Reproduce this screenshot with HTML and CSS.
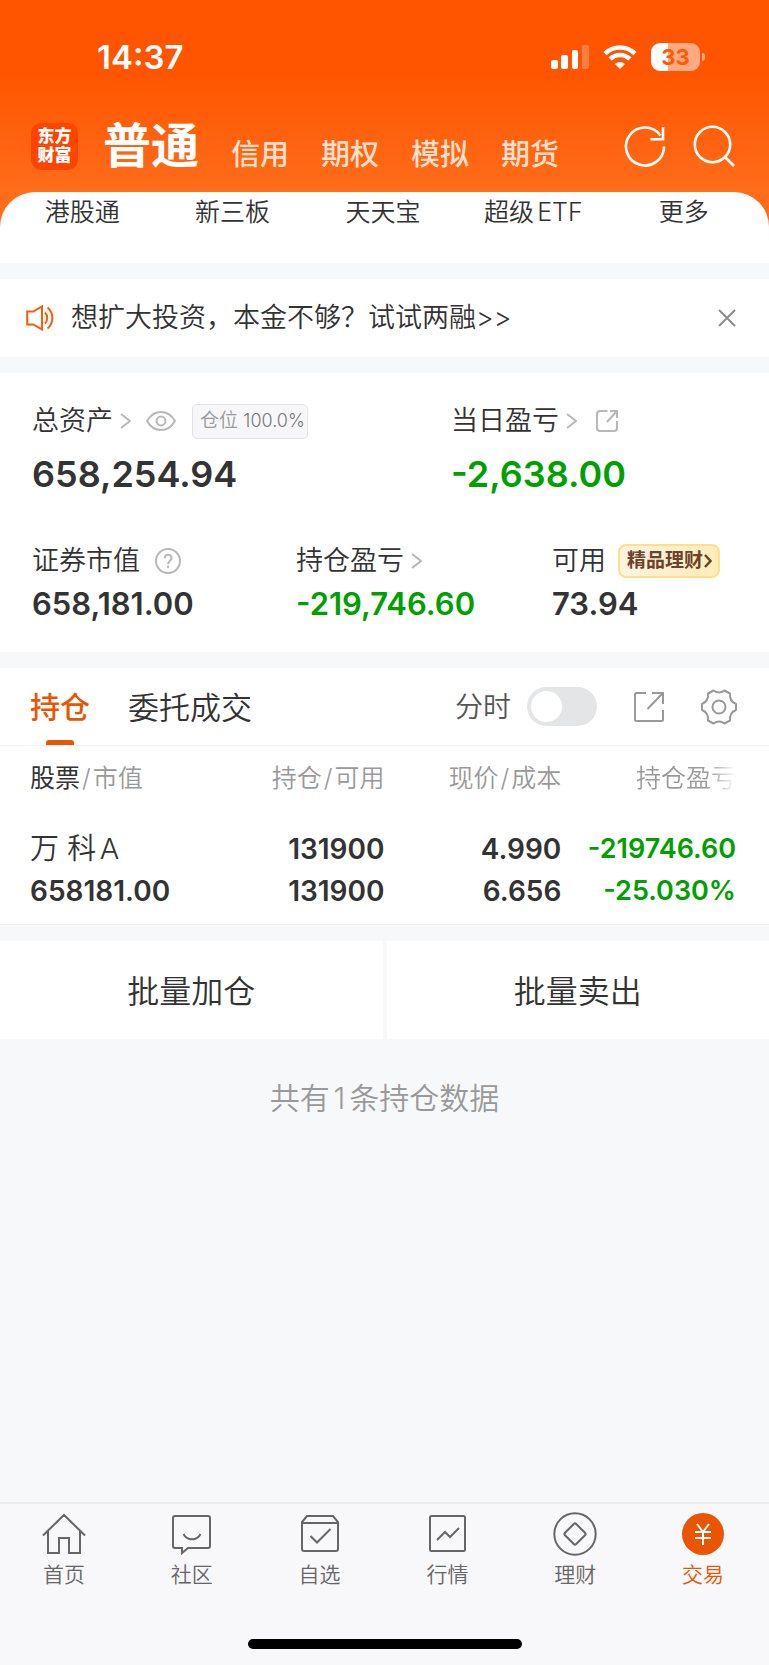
FILE: index.html
```html
<!DOCTYPE html>
<html lang="zh-CN">
<head>
  <meta charset="UTF-8" />
  <meta name="viewport" content="width=device-width, initial-scale=1" />
  <title>东方财富 - 交易</title>
  <link rel="stylesheet" href="styles.css">
</head>
<body>
  <header class="header">
    <div class="status-bar">
      <span class="time">14:37</span>
      <div class="status-icons">
        <svg width="38" height="24" viewBox="0 0 38 24" fill="#fff">
          <rect x="0" y="15" width="7" height="9" rx="2" />
          <rect x="10" y="10" width="7" height="14" rx="2" />
          <rect x="21" y="5" width="6" height="19" rx="2" />
          <rect x="31" y="0" width="7" height="24" rx="2" opacity=".25" />
        </svg>
        <svg width="34" height="24" viewBox="0 0 34 24" fill="none" stroke="#fff" stroke-width="4.6">
          <path d="M2 8.6a21.5 21.5 0 0 1 30 0" />
          <path d="M7.2 14a14 14 0 0 1 19.6 0" />
          <path d="M17 24l-5-4.9a7.2 7.2 0 0 1 10 0z" fill="#fff" stroke="none" />
        </svg>
        <span class="battery"><span class="battery-level">33</span></span>
      </div>
    </div>
    <nav class="top-nav">
      <a class="logo" href="#"><span>东方</span><span>财富</span></a>
      <a class="account active" href="#">普通</a>
      <a class="account" href="#">信用</a>
      <a class="account" href="#">期权</a>
      <a class="account" href="#">模拟</a>
      <a class="account" href="#">期货</a>
      <div class="top-actions">
        <button class="icon-btn" aria-label="刷新">
          <svg width="42" height="42" viewBox="0 0 42 42" fill="none" stroke="#fff" stroke-width="2.6">
            <path d="M40 21.5A19 19 0 1 1 36.5 10.5" />
            <path d="M39 2v12.3H26.5" />
          </svg>
        </button>
        <button class="icon-btn" aria-label="搜索">
          <svg width="42" height="42" viewBox="0 0 42 42" fill="none" stroke="#fff" stroke-width="2.6">
            <circle cx="19.5" cy="19.5" r="17.7" />
            <path d="M31.5 31.5l9.5 9.5" />
          </svg>
        </button>
      </div>
    </nav>
  </header>

  <main class="main">
    <nav class="shortcuts">
      <a href="#">港股通</a>
      <a href="#">新三板</a>
      <a href="#">天天宝</a>
      <a href="#">超级ETF</a>
      <a href="#">更多</a>
    </nav>

    <section class="notice">
      <svg width="28" height="26" viewBox="0 0 28 26" fill="none" stroke="#ff5a0a" stroke-width="2">
        <path d="M1.2 6.5h6L16 1.4v23L7.2 19.5h-6z" />
        <path d="M19 7.5c3 3 3 8 0 11" />
        <path d="M21.5 2.5c6.500 5.500 6.500 15.500 0 21" />
      </svg>
      <a class="notice-text" href="#">想扩大投资&#xFF0C;本金不够&#xFF1F;试试两融&gt;&gt;</a>
      <button class="icon-btn" aria-label="关闭">
        <svg width="18" height="18" viewBox="0 0 18 18" fill="none" stroke="#8c8c8c" stroke-width="2">
          <path d="M1 1l16 16M17 1L1 17" />
        </svg>
      </button>
    </section>

    <section class="assets">
      <div class="assets-row assets-total">
        <div class="asset">
          <div class="asset-label">
            总资产
            <svg class="chevron" width="11" height="16" viewBox="0 0 11 16"><path d="M1 1l9 7-9 7" /></svg>
            <svg class="eye" width="30" height="20" viewBox="0 0 30 20">
              <path d="M1 10C8-2 22-2 29 10 22 22 8 22 1 10z" />
              <circle cx="15" cy="10" r="4.4" />
            </svg>
            <span class="position-tag">仓位 <span>100.0%</span></span>
          </div>
          <div class="asset-value">658,254.94</div>
        </div>
        <div class="asset">
          <div class="asset-label">
            当日盈亏
            <svg class="chevron" width="11" height="16" viewBox="0 0 11 16"><path d="M1 1l9 7-9 7" /></svg>
            <svg class="share" width="22" height="22" viewBox="0 0 22 22">
              <path d="M11.5 1H4a3 3 0 0 0-3 3v14a3 3 0 0 0 3 3h14a3 3 0 0 0 3-3v-7" />
              <path d="M14 1h7v7M21 1L11 12" />
            </svg>
          </div>
          <div class="asset-value down">-2,638.00</div>
        </div>
      </div>
      <div class="assets-row assets-detail">
        <div class="asset">
          <div class="asset-label">
            证券市值
            <svg class="help" width="26" height="26" viewBox="0 0 26 26">
              <circle cx="13" cy="13" r="12" />
              <path d="M9.7 10.3c0-4.600 6.800-4.600 6.800-.3 0 3-3.400 3-3.400 6.200M13.100 17.800v2.200" />
            </svg>
          </div>
          <div class="asset-value">658,181.00</div>
        </div>
        <div class="asset">
          <div class="asset-label">
            持仓盈亏
            <svg class="chevron" width="11" height="16" viewBox="0 0 11 16"><path d="M1 1l9 7-9 7" /></svg>
          </div>
          <div class="asset-value down">-219,746.60</div>
        </div>
        <div class="asset">
          <div class="asset-label">
            可用
            <a class="finance-tag" href="#">精品理财<svg width="8" height="14" viewBox="0 0 8 14"><path d="M1 1l5.5 6L1 13" /></svg></a>
          </div>
          <div class="asset-value">73.94</div>
        </div>
      </div>
    </section>

    <section class="holdings">
      <div class="tabs">
        <button class="tab active">持仓</button>
        <button class="tab">委托成交</button>
        <div class="tab-tools">
          <label class="switch">分时<input type="checkbox"></label>
          <button class="icon-btn" aria-label="分享">
            <svg width="30" height="30" viewBox="0 0 30 30" fill="none" stroke="#999" stroke-width="2">
              <path d="M12 1H2.500A1.500 1.500 0 0 0 1 2.500v25A1.500 1.500 0 0 0 2.500 29h25a1.500 1.500 0 0 0 1.500-1.500V18" />
              <path d="M18 1h11v11M29 1L13.500 17" />
            </svg>
          </button>
          <button class="icon-btn" aria-label="设置">
            <svg width="36" height="36" viewBox="0 0 36 36" fill="none" stroke="#999" stroke-width="2" stroke-linejoin="round">
              <path d="M12.500 1.500c3.500 2.500 7.500 2.500 11 0l5.500 3c-.5 5.500 1 8.500 6 10.500v6c-5 2-6.500 5-6 10.500l-5.500 3c-3.500-2.500-7.500-2.500-11 0L7 31.500C7.500 26 6 23 1 21v-6c5-2 6.500-5 6-10.500z" />
              <circle cx="18" cy="18" r="6.500" />
            </svg>
          </button>
        </div>
      </div>

      <table class="stock-table">
        <thead>
          <tr>
            <th><b>股票</b><i>/</i>市值</th>
            <th>持仓<i>/</i>可用</th>
            <th>现价<i>/</i>成本</th>
            <th><span class="fade">持仓盈亏</span></th>
          </tr>
        </thead>
        <tbody>
          <tr>
            <td><span class="stock-name">万 科A</span><span>658181.00</span></td>
            <td><span>131900</span><span>131900</span></td>
            <td><span>4.990</span><span>6.656</span></td>
            <td class="profit down"><span>-219746.60</span><span>-25.030%</span></td>
          </tr>
        </tbody>
      </table>
    </section>

    <div class="batch">
      <button>批量加仓</button>
      <button>批量卖出</button>
    </div>

    <p class="summary">共有1条持仓数据</p>
  </main>

  <footer class="footer">
    <nav class="tab-bar">
      <a href="#">
        <svg width="44" height="44" viewBox="0 0 44 44">
          <path d="M1 23.500L22 3l21 20.500M6 19v22h11V26h10v15h11V19" />
        </svg>
        首页
      </a>
      <a href="#">
        <svg width="44" height="44" viewBox="0 0 44 44">
          <path d="M5 4h33a2 2 0 0 1 2 2v28a2 2 0 0 1-2 2H18l-6 5v-5H5a2 2 0 0 1-2-2V6a2 2 0 0 1 2-2z" />
          <path d="M13.500 22c3.500 7 13.500 7 17 0" />
        </svg>
        社区
      </a>
      <a href="#">
        <svg width="44" height="44" viewBox="0 0 44 44">
          <path d="M4 10l5-6h26l5 6v27a2 2 0 0 1-2 2H6a2 2 0 0 1-2-2zM4 11h36" />
          <path d="M12.500 24l6.500 6.500L32.500 17" />
        </svg>
        自选
      </a>
      <a href="#">
        <svg width="44" height="44" viewBox="0 0 44 44">
          <rect x="5" y="4" width="35" height="35" rx="1.5" />
          <path d="M12 28l8-8 5 5 9-9" />
        </svg>
        行情
      </a>
      <a href="#">
        <svg width="44" height="44" viewBox="0 0 44 44">
          <circle cx="22" cy="22" r="20.7" />
          <path d="M20.800 12L12 20.800a1.700 1.700 0 0 0 0 2.400L20.800 32a1.700 1.700 0 0 0 2.400 0L32 23.200a1.700 1.700 0 0 0 0-2.400L23.200 12a1.700 1.700 0 0 0-2.400 0z" />
        </svg>
        理财
      </a>
      <a class="active" href="#">
        <svg width="44" height="44" viewBox="0 0 44 44">
          <circle class="coin" cx="22" cy="22" r="21" />
          <path class="yen" d="M16 12l6 8 6-8M22 20v13M14 20h16M14 26h16" />
        </svg>
        交易
      </a>
    </nav>
    <div class="home-indicator"></div>
  </footer>
</body>
</html>
```
FILE: styles.css
```css
* {
  box-sizing: border-box;
}

body {
  margin: 0;
  min-height: 100vh;
  display: flex;
  flex-direction: column;
  font-family: Inter, "Noto Sans CJK SC", sans-serif;
  font-weight: 350;
  text-autospace: normal;
  color: #333;
  background: #f7f8fa;
}

a {
  color: inherit;
  text-decoration: none;
}

button {
  padding: 0;
  border: none;
  background: none;
  font: inherit;
  color: inherit;
  cursor: pointer;
}

svg {
  display: block;
  flex: none;
}

.icon-btn {
  display: flex;
}

/* header */
.header {
  height: 240px;
  color: #fff;
  background: linear-gradient(#ff5500 75px, #ff6d1a 192px);
}

.status-bar {
  display: flex;
  justify-content: space-between;
  align-items: center;
  height: 114px;
  padding: 0 66px 0 97px;
}

.time {
  font-size: 33px;
  font-weight: 600;
}

.status-icons {
  display: flex;
  align-items: center;
  gap: 14px;
}

.battery {
  position: relative;
  width: 49px;
  height: 28px;
  margin-right: 3px;
  border-radius: 9px;
  background: linear-gradient(90deg, #fff 34%, #ffaa80 34%);
}

.battery::after {
  content: "";
  position: absolute;
  top: 10px;
  right: -5px;
  width: 3px;
  height: 8px;
  border-radius: 0 3px 3px 0;
  background: #ffaa80;
}

.battery-level {
  display: block;
  font-size: 22px;
  font-weight: 700;
  line-height: 28px;
  text-align: center;
  color: #ff5a0a;
}

.top-nav {
  display: flex;
  align-items: center;
  height: 64px;
  padding: 0 34px 0 31px;
}

.logo {
  display: flex;
  flex-direction: column;
  justify-content: center;
  align-items: center;
  width: 47px;
  height: 47px;
  margin-right: 25px;
  border-radius: 10px;
  background: #ff4400;
  font-size: 17px;
  font-weight: 900;
  line-height: 19px;
}

.account {
  margin: 18px 32px 0 0;
  font-size: 29px;
  font-weight: 500;
  line-height: 40px;
  color: #ffe0cf;
}

.account.active {
  margin-top: 0;
  font-size: 48px;
  font-weight: 700;
  line-height: 64px;
  color: #fff;
}

.top-actions {
  display: flex;
  gap: 27px;
  margin-left: auto;
}

/* content */
.main {
  flex: 1;
}

.shortcuts {
  display: grid;
  grid-template-columns: repeat(5, 1fr);
  height: 71px;
  margin-top: -48px;
  padding: 0 10px 0 7px;
  border-radius: 35px 35px 0 0;
  background: #fff;
  font-size: 25px;
  line-height: 40px;
  text-align: center;
}

.notice {
  display: flex;
  align-items: center;
  height: 78px;
  margin: 16px 0;
  padding: 0 33px 0 26px;
  background: #fff;
}

.notice-text {
  flex: 1;
  margin-left: 17px;
  font-size: 27px;
  line-height: 38px;
}

.assets {
  padding: 28px 32px 25px;
  background: #fff;
}

.assets-row {
  display: grid;
}

.assets-total {
  grid-template-columns: 419fr 286fr;
  margin-bottom: 34px;
}

.assets-detail {
  grid-template-columns: 264fr 256fr 185fr;
}

.asset-label {
  display: flex;
  align-items: center;
  height: 40px;
  font-size: 27px;
  line-height: 38px;
  white-space: nowrap;
}

.asset-label svg {
  fill: none;
  stroke: #b8b8b8;
  stroke-width: 2;
}

.asset-label .chevron {
  margin-left: 7px;
}

.asset-label .eye,
.asset-label .help {
  margin-left: 15px;
}

.asset-label .share {
  margin-left: 19px;
}

.asset-value {
  font-size: 36px;
  font-weight: 600;
  line-height: 66px;
}

.assets-detail .asset-value {
  font-size: 31px;
  line-height: 46px;
}

.down {
  color: #00a000;
}

.position-tag {
  height: 35px;
  margin-left: 16px;
  padding: 0 2px 0 7px;
  border: 1px solid #e3e3e6;
  border-radius: 5px;
  background: #f7f7fa;
  font-size: 19px;
  line-height: 32px;
  color: #999;
}

.position-tag span {
  font-size: 18px;
  color: #777;
}

.finance-tag {
  display: flex;
  align-items: center;
  gap: 1px;
  height: 34px;
  margin-left: 12px;
  padding: 0 6px 0 7px;
  border: 2px solid #ffe08a;
  border-radius: 8px;
  background: linear-gradient(90deg, #fff3e2, #ffebb8);
  font-size: 19px;
  font-weight: 700;
  line-height: 28px;
  color: #6b432b;
}

.asset-label .finance-tag svg {
  stroke: #6b432b;
  stroke-width: 2.5;
}

/* holdings */
.holdings {
  margin: 16px 0;
  border-bottom: 1px solid #eee;
  background: #fff;
}

.tabs {
  display: flex;
  height: 78px;
  padding: 0 32px 0 30px;
  border-bottom: 1px solid #f0f1f3;
}

.tab {
  position: relative;
  margin-right: 38px;
  padding-bottom: 3px;
  font-size: 31px;
}

.tab.active {
  font-size: 30px;
  font-weight: 500;
  color: #ea5504;
}

.tab.active::after {
  content: "";
  position: absolute;
  bottom: 0;
  left: 50%;
  width: 28px;
  height: 5px;
  margin-left: -14px;
  border-radius: 3px 3px 0 0;
  background: #ea5504;
}

.tab-tools {
  display: flex;
  align-items: center;
  gap: 37px;
  margin-left: auto;
}

.switch {
  display: flex;
  align-items: center;
  gap: 16px;
  font-size: 28px;
  line-height: 38px;
  color: #555;
}

.switch input {
  appearance: none;
  width: 70px;
  height: 39px;
  margin: 0;
  padding: 4px;
  border-radius: 20px;
  background: #e4e5e7;
}

.switch input::before {
  content: "";
  display: block;
  width: 31px;
  height: 31px;
  border-radius: 50%;
  background: #fff;
}

.switch input:checked {
  padding-left: 35px;
  background: #ea5504;
}

.stock-table {
  width: 100%;
  border-collapse: collapse;
  table-layout: fixed;
  text-align: right;
}

.stock-table th {
  height: 60px;
  padding: 0;
  font-size: 25px;
  font-weight: 350;
  color: #999;
}

.stock-table th:nth-child(1) {
  width: 30%;
}

.stock-table th:nth-child(2) {
  width: 20%;
}

.stock-table th:nth-child(3) {
  width: 23%;
}

.stock-table th:first-child,
.stock-table td:first-child {
  padding-left: 30px;
  text-align: left;
}

.stock-table th:last-child,
.stock-table td:last-child {
  padding-right: 33px;
}

.stock-table b {
  font-weight: 400;
  color: #333;
}

.stock-table i {
  margin: 0 2px;
  font-style: normal;
}

.fade {
  background: linear-gradient(90deg, #999 72%, #fff);
  background-clip: text;
  color: transparent;
}

.stock-table td {
  padding: 22px 0 12px;
  font-size: 28px;
  font-weight: 600;
  line-height: 42px;
}

.stock-table td span {
  display: block;
}

.stock-table .profit {
  font-size: 27px;
}

.stock-table .stock-name {
  font-size: 29px;
  font-weight: 350;
}

.batch {
  display: grid;
  grid-template-columns: 1fr 1fr;
  gap: 4px;
}

.batch button {
  height: 98px;
  padding-bottom: 3px;
  background: #fff;
  font-size: 32px;
}

.summary {
  margin: 35px 0;
  font-size: 30px;
  line-height: 48px;
  text-align: center;
  color: #999;
}

/* bottom bar */
.footer {
  padding-bottom: 16px;
  border-top: 2px solid #ebecee;
  background: #f8f8fa;
}

.tab-bar {
  display: grid;
  grid-template-columns: repeat(6, 1fr);
  height: 135px;
  padding-right: 2px;
}

.tab-bar a {
  display: flex;
  flex-direction: column;
  align-items: center;
  padding-top: 8px;
  font-size: 21px;
  line-height: 38px;
  color: #666;
}

.tab-bar svg {
  fill: none;
  stroke: #666;
  stroke-width: 2;
}

.tab-bar .active {
  color: #ea5504;
}

.tab-bar .coin {
  fill: #ea5504;
  stroke: none;
}

.tab-bar .yen {
  stroke: #fff;
}

.home-indicator {
  width: 274px;
  height: 10px;
  margin: 0 auto;
  border-radius: 5px;
  background: #000;
}
```
